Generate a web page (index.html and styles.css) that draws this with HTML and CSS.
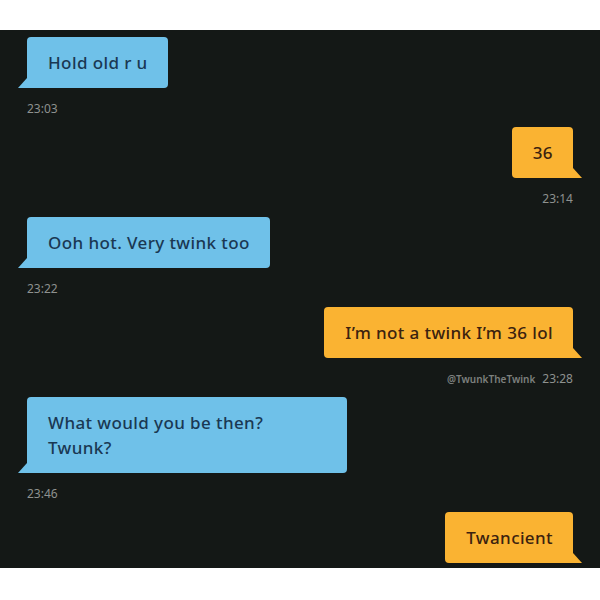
FILE: index.html
```html
<!DOCTYPE html>
<html lang="en">
<head>
  <meta charset="UTF-8">
  <title>Chat</title>
  <link rel="stylesheet" href="styles.css">
</head>
<body>

<div class="chat">
  <div class="msg in">
    <div class="bubble">Hold old r u</div>
    <div class="time">23:03</div>
  </div>

  <div class="msg out">
    <div class="bubble">36</div>
    <div class="time">23:14</div>
  </div>

  <div class="msg in">
    <div class="bubble">Ooh hot. Very twink too</div>
    <div class="time">23:22</div>
  </div>

  <div class="msg out">
    <div class="bubble">I’m not a twink I’m 36 lol</div>
    <div class="time"><span class="tag">@TwunkTheTwink</span>23:28</div>
  </div>

  <div class="msg in">
    <div class="bubble wide">What would you be then?<br>Twunk?</div>
    <div class="time">23:46</div>
  </div>

  <div class="msg out">
    <div class="bubble">Twancient</div>
  </div>
</div>

</body>
</html>
```

FILE: styles.css
```css
body {
  margin: 0;
  background-color: #ffffff;
  font-family: "Noto Sans", sans-serif;
}
.chat {
  margin-top: 30px;
  height: 538px;
  box-sizing: border-box;
  background-color: #141816;
  padding: 7px 27px 0 27px;
  display: flex;
  flex-direction: column;
  overflow: hidden;
}
.msg {
  display: flex;
  flex-direction: column;
  margin-bottom: 11px;
}
.msg.in {
  align-items: flex-start;
}
.msg.out {
  align-items: flex-end;
}
.bubble {
  position: relative;
  font-size: 17px;
  font-weight: 500;
  letter-spacing: 0.4px;
  line-height: 25px;
  padding: 13px 20px 13px 21px;
}
.in .bubble {
  background-color: #6fc1e9;
  color: #1a3853;
  border-radius: 4px 4px 4px 0;
}
.out .bubble {
  background-color: #fab332;
  color: #3b220f;
  border-radius: 4px 4px 0 4px;
}
.in .bubble::after {
  content: "";
  position: absolute;
  left: -9px;
  bottom: 0;
  border-bottom: 10px solid #6fc1e9;
  border-left: 9px solid transparent;
}
.out .bubble::after {
  content: "";
  position: absolute;
  right: -9px;
  bottom: 0;
  border-bottom: 10px solid #fab332;
  border-right: 9px solid transparent;
}
.bubble.wide {
  width: 279px;
}
.time {
  margin-top: 14px;
  line-height: 14px;
  font-size: 12px;
  color: #8e918f;
  height: 14px;
}
.tag {
  font-size: 10px;
  font-weight: 600;
  color: #7d807e;
  margin-right: 7px;
}
```
